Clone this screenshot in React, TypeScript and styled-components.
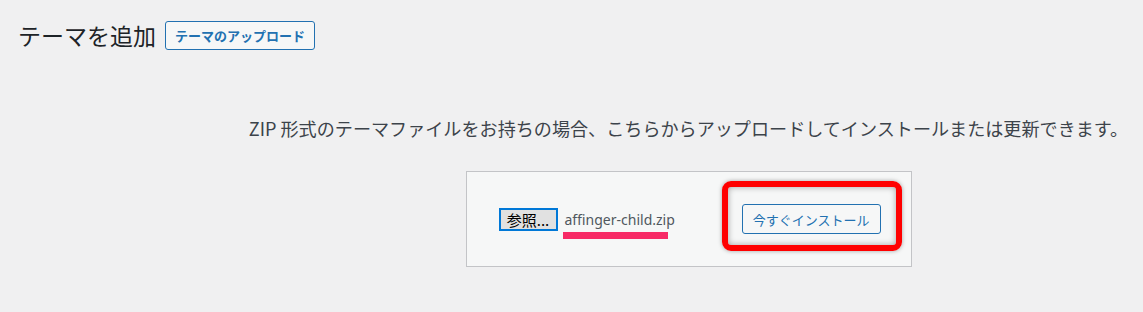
import React from "react";
import styled, { createGlobalStyle } from "styled-components";

const GlobalStyle = createGlobalStyle`
  html, body {
    margin: 0;
    padding: 0;
    background: #f0f0f1;
  }
  body {
    font-family: "Noto Sans", "Noto Sans CJK JP", sans-serif;
    color: #3c434a;
  }
`;

const Wrap = styled.div`
  padding: 21px 0 0 18px;
  width: 1125px;
  height: 291px;
`;

const HeaderRow = styled.div`
  display: flex;
  align-items: center;
  gap: 9px;
`;

const Title = styled.h1`
  margin: 0;
  font-family: "Noto Sans CJK JP", sans-serif;
  font-size: 23px;
  font-weight: 400;
  line-height: 29px;
  color: #1d2327;
`;

const OutlineButton = styled.button<{ $bold?: boolean }>`
  display: inline-flex;
  align-items: center;
  box-sizing: border-box;
  height: ${(p) => (p.$bold ? "29px" : "30px")};
  padding: 0 ${(p) => (p.$bold ? "9px" : "10px")};
  border: 1px solid #2271b1;
  border-radius: 3px;
  background: #f6f7f7;
  color: #2271b1;
  font-family: "Noto Sans CJK JP", sans-serif;
  font-size: 13px;
  font-weight: ${(p) => (p.$bold ? 600 : 400)};
  cursor: pointer;
`;

const UploadArea = styled.div`
  padding-left: 216px;
  text-align: center;
`;

const Help = styled.p`
  margin: 65px 0 0;
  font-family: "Noto Sans CJK JP", sans-serif;
  font-size: 18.1px;
  line-height: 26px;
  color: #3c434a;
  white-space: nowrap;
`;

const UploadForm = styled.form`
  display: inline-flex;
  justify-content: space-between;
  align-items: center;
  box-sizing: border-box;
  width: 446px;
  height: 96px;
  margin-top: 30px;
  padding: 0 30px 0 32px;
  background: #f6f7f7;
  border: 1px solid #c3c4c7;
`;

const FileRow = styled.div`
  display: flex;
  align-items: center;
`;

const BrowseButton = styled.span`
  box-sizing: border-box;
  display: inline-flex;
  align-items: center;
  justify-content: center;
  width: 59px;
  height: 23px;
  border: 2px solid #0078d7;
  background: #e1e1e1;
  color: #000;
  font-family: "Noto Sans CJK JP", sans-serif;
  font-size: 15px;
`;

const FileName = styled.span`
  position: relative;
  margin-left: 7px;
  font-size: 14px;
  line-height: 23px;
  color: #50575e;

  &::after {
    content: "";
    position: absolute;
    left: -2px;
    top: calc(100% + 1px);
    width: 105px;
    height: 7px;
    background: #f72a66;
  }
`;

const Highlight = styled.div`
  position: relative;
`;

const RedFrame = styled.span`
  position: absolute;
  left: -20px;
  top: -23px;
  width: 180px;
  height: 70px;
  box-sizing: border-box;
  border: 6px solid #ff0000;
  border-radius: 9px;
  box-shadow: 0 0 4px rgba(0, 0, 0, 0.35), inset 0 0 6px rgba(0, 0, 0, 0.35);
  pointer-events: none;
`;

export default function App() {
  return (
    <>
      <GlobalStyle />
      <Wrap>
        <HeaderRow>
          <Title>テーマを追加</Title>
          <OutlineButton $bold>テーマのアップロード</OutlineButton>
        </HeaderRow>
        <UploadArea>
          <Help>
            ZIP 形式のテーマファイルをお持ちの場合、こちらからアップロードしてインストールまたは更新できます。
          </Help>
          <UploadForm onSubmit={(e) => e.preventDefault()}>
            <FileRow>
              <BrowseButton>参照...</BrowseButton>
              <FileName>affinger-child.zip</FileName>
            </FileRow>
            <Highlight>
              <OutlineButton>今すぐインストール</OutlineButton>
              <RedFrame />
            </Highlight>
          </UploadForm>
        </UploadArea>
      </Wrap>
    </>
  );
}
